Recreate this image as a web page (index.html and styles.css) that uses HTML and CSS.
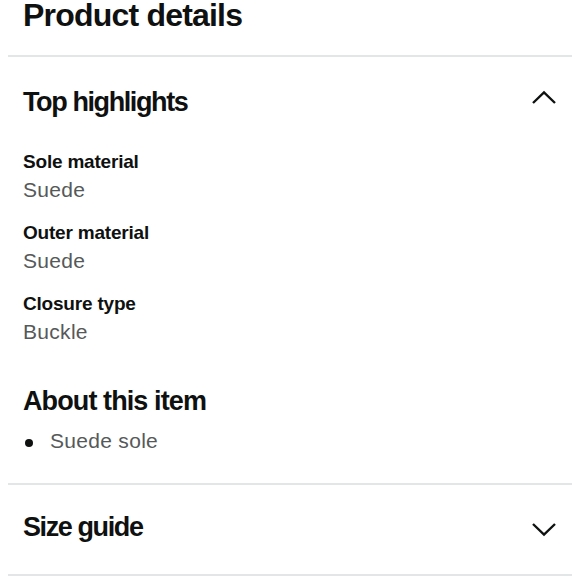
FILE: index.html
```html
<!DOCTYPE html>
<html>
<head>
    <meta charset="utf-8" />
    <title>Product details</title>
    <link rel="stylesheet" href="styles.css">
</head>
<body>
    <div class="page">
        <h1 class="page-title">Product details</h1>

        <section class="panel panel-open">
            <div class="panel-head">
                <h2 class="panel-title">Top highlights</h2>
                <svg class="chevron" viewBox="0 0 24 24" width="24" height="24">
                    <polyline points="1,13 12,2.5 23,13" />
                </svg>
            </div>

            <dl class="facts">
                <div class="fact">
                    <dt class="fact-name">Sole material</dt>
                    <dd class="fact-value">Suede</dd>
                </div>
                <div class="fact">
                    <dt class="fact-name">Outer material</dt>
                    <dd class="fact-value">Suede</dd>
                </div>
                <div class="fact">
                    <dt class="fact-name">Closure type</dt>
                    <dd class="fact-value">Buckle</dd>
                </div>
            </dl>

            <h2 class="panel-title about-title">About this item</h2>
            <ul class="bullets">
                <li>Suede sole</li>
            </ul>
        </section>

        <section class="panel panel-closed">
            <div class="panel-head">
                <h2 class="panel-title">Size guide</h2>
                <svg class="chevron" viewBox="0 0 24 24" width="24" height="24">
                    <polyline points="1,9 12,19.5 23,9" />
                </svg>
            </div>
        </section>
    </div>
</body>
</html>
```

FILE: styles.css
```css
* {
    padding: 0;
    margin: 0;
    box-sizing: border-box;
}

body {
    font-family: "Liberation Sans", Arial, sans-serif;
    color: #0f1111;
    background: #fff;
}

.page {
    padding: 0 8px;
}

.page-title {
    margin: 0 15px 25px;
    font-size: 32px;
    line-height: 30px;
    font-weight: 700;
    letter-spacing: -0.8px;
}

.panel {
    border-top: 2px solid #e3e6e6;
    padding: 29px 15px 28px;
}

.panel-closed {
    padding-top: 26px;
    padding-bottom: 31px;
    border-bottom: 2px solid #e3e6e6;
}

.panel-head {
    display: flex;
    justify-content: space-between;
    align-items: center;
}

.panel-title {
    font-size: 27px;
    line-height: 32px;
    font-weight: 700;
    letter-spacing: -1.4px;
}

.chevron {
    margin-right: 1px;
    fill: none;
    stroke: #0f1111;
    stroke-width: 2.4;
}

.facts {
    margin-top: 32px;
    display: flex;
    flex-direction: column;
    gap: 17px;
}

.fact-name {
    font-size: 19px;
    line-height: 24px;
    font-weight: 700;
    letter-spacing: -0.2px;
}

.fact-value {
    margin-top: 2px;
    font-size: 21px;
    line-height: 28px;
    color: #565959;
    letter-spacing: 0.3px;
}

.about-title {
    margin-top: 39px;
    letter-spacing: -0.9px;
}

.bullets {
    list-style: none;
    margin-top: 10px;
}

.bullets li {
    position: relative;
    padding-left: 27px;
    font-size: 21px;
    line-height: 28px;
    color: #565959;
    letter-spacing: 0.3px;
}

.bullets li::before {
    content: "";
    position: absolute;
    left: 2px;
    top: 12px;
    width: 8px;
    height: 8px;
    border-radius: 50%;
    background: #0f1111;
}
```
